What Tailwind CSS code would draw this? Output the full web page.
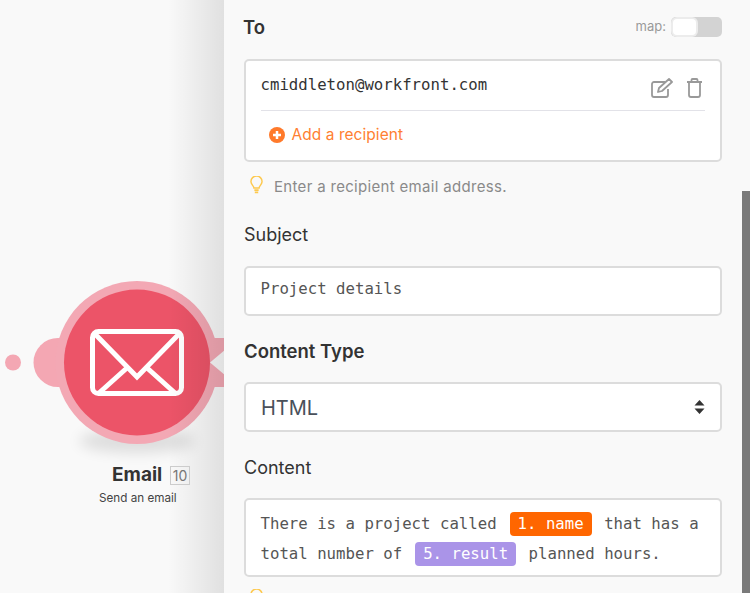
<!DOCTYPE html>
<html lang="en">

<head>
    <meta charset="UTF-8">
    <title>Email module</title>
    <script src="https://cdn.jsdelivr.net/npm/@tailwindcss/browser@4"></script>
</head>

<body class="bg-[#f9f9f9] overflow-hidden">
    <div class="flex w-[750px] h-[593px] overflow-hidden font-['Inter',sans-serif]">
        <!-- canvas with the module node -->
        <div class="relative w-[224px] h-full shrink-0 bg-[#f9f9f9]">
            <svg class="absolute left-0 top-0" width="224" height="593" viewBox="0 0 224 593">
                <defs>
                    <filter id="blur" x="-30%" y="-100%" width="160%" height="300%">
                        <feGaussianBlur stdDeviation="7" />
                    </filter>
                </defs>
                <ellipse cx="137" cy="441" rx="58" ry="12" fill="#000" opacity="0.11" filter="url(#blur)" />
                <circle cx="13" cy="362.500" r="8" fill="#f4a7b3" />
                <circle cx="58" cy="362.500" r="24.500" fill="#f4a7b3" />
                <circle cx="137" cy="362.500" r="81.500" fill="#f3a8b4" />
                <path d="M196 345a12 12 0 0 1 12-7h16v49h-16a12 12 0 0 1-12-7z" fill="#f3a8b4" />
                <path d="M226 349l-16 13.500 16 13.500z" fill="#f9f9f9" />
                <circle cx="137" cy="362.500" r="73" fill="#ec5468" />
                <g fill="none" stroke="#fff" stroke-width="5">
                    <rect x="92.500" y="331.500" width="89" height="62" rx="6" />
                    <path d="M95 334l42 43 42-43" />
                    <path d="M99 393l29-26M175 393l-29-26" />
                </g>
            </svg>
            <!-- shadow the panel throws on the canvas -->
            <div class="absolute inset-y-0 right-0 w-[56px] bg-gradient-to-r from-black/0 to-black/10"></div>
            <div class="absolute left-0 top-[464px] w-full">
                <div class="relative h-[22px]">
                    <span class="absolute left-[112px] top-0 text-[19px] leading-[22px] font-bold text-[#333]">Email</span>
                    <span class="absolute left-[170px] top-[2px] w-[20px] h-[19px] border border-[#ccc] text-[14px] leading-[17px] text-center text-[#777]">10</span>
                </div>
                <p class="absolute left-[99px] top-[26px] text-[11.700px] leading-[16px] text-[#444] whitespace-nowrap">Send an email</p>
            </div>
        </div>

        <!-- settings panel -->
        <div class="relative flex-1 h-full pl-5 pr-7 bg-[#f9f9f9]">
            <div class="flex items-center justify-between h-[24px] mt-[15px]">
                <span class="-ml-[1px] mt-[2px] text-[18.500px] font-semibold text-[#333]">To</span>
                <div class="flex items-center gap-[5px]">
                    <span class="text-[13px] text-[#999]">map:</span>
                    <div class="flex w-[51px] h-[20px] rounded-[5px] bg-[#d3d3d3] p-[2px]">
                        <div class="w-[23px] h-[16px] rounded-[4px] bg-white ring-2 ring-[#ececec]"></div>
                    </div>
                </div>
            </div>

            <div class="mt-[20px] h-[103px] rounded-[5px] border-2 border-[#dcdcdc] bg-white pl-[14.500px] pr-[15px]">
                <div class="flex justify-between h-[50px] border-b border-[#e2e2e8]">
                    <span class="font-['DejaVu_Sans_Mono',monospace] text-[15.700px] leading-[20px] mt-[14px] text-[#333]">cmiddleton@workfront.com</span>
                    <div class="flex gap-[13px] mt-[17px] h-[20px] mr-[2px]">
                        <svg width="22" height="20" viewBox="0 0 22 20" fill="none" stroke="#999" stroke-width="1.800">
                            <path d="M14 4H3a2 2 0 0 0-2 2v11a2 2 0 0 0 2 2h12a2 2 0 0 0 2-2v-6" />
                            <path d="M8 10l10-9 3 3-10 9-4 1z" stroke-linejoin="round" />
                        </svg>
                        <svg width="17" height="20" viewBox="0 0 17 20" fill="none" stroke="#999" stroke-width="1.800">
                            <path d="M1 4h15M5.500 4V2a1 1 0 0 1 1-1h4a1 1 0 0 1 1 1v2" />
                            <path d="M3 4v13a2 2 0 0 0 2 2h7a2 2 0 0 0 2-2V4" />
                        </svg>
                    </div>
                </div>
                <div class="flex items-center gap-[7px] h-[47px] pl-[8px]">
                    <svg width="16" height="16" viewBox="0 0 16 16">
                        <circle cx="8" cy="8" r="8" fill="#ff7a2b" />
                        <path d="M8 4v8M4 8h8" stroke="#fff" stroke-width="2.500" />
                    </svg>
                    <span class="text-[15.500px] tracking-[0.05px] text-[#ff7f32]">Add a recipient</span>
                </div>
            </div>

            <div class="flex items-center h-[20px] mt-[15px] pl-[6px] gap-[11px]">
                <svg class="-mt-[4px]" width="13" height="18" viewBox="0 0 15 21" fill="none" stroke="#fdc94f" stroke-width="1.700">
                    <path d="M4.500 14c0-2.500-3.500-4-3.500-7.500a6.500 6.500 0 0 1 13 0C14 10 10.500 11.500 10.500 14z" />
                    <path d="M5 16.500h5M5.500 19h4" stroke-width="2" />
                </svg>
                <span class="text-[15px] tracking-[0.32px] text-[#8a8a8a]">Enter a recipient email address.</span>
            </div>

            <p class="mt-[26px] text-[18px] leading-[24px] text-[#333]">Subject</p>
            <div class="flex items-center mt-[19px] h-[50px] rounded-[5px] border-2 border-[#dcdcdc] bg-white pl-[14.500px] pr-[15px]">
                <span class="-mt-[4px] font-['DejaVu_Sans_Mono',monospace] text-[15.700px] text-[#555]">Project details</span>
            </div>

            <p class="mt-[23px] text-[18.500px] leading-[24px] font-semibold text-[#333]">Content Type</p>
            <div class="flex items-center justify-between mt-[19px] h-[50px] rounded-[5px] border-2 border-[#dcdcdc] bg-white pl-[15px] pr-[15px]">
                <span class="mt-[1px] text-[20px] text-[#49505a]">HTML</span>
                <svg width="11" height="14" viewBox="0 0 11 14" fill="#333">
                    <path d="M5.500 0l5 5.500H.5zM5.500 14l5-5.500H.5z" />
                </svg>
            </div>

            <p class="mt-[24px] text-[18px] leading-[24px] text-[#333]">Content</p>
            <div class="mt-[18px] h-[79px] rounded-[5px] border-2 border-[#dcdcdc] bg-white pl-[14.500px] pr-[15px] pt-[9px] font-['DejaVu_Sans_Mono',monospace] text-[15.700px] leading-[30px] text-[#555] whitespace-nowrap">
                <div>There is a project called <span class="inline-block ml-[3.500px] mr-[3px] px-[8px] h-[24px] leading-[24px] rounded-[4px] bg-[#ff6600] text-white">1. name</span> that has a</div>
                <div>total number of <span class="inline-block ml-[3.500px] mr-[3px] px-[8px] h-[24px] leading-[24px] rounded-[4px] bg-[#aa94e8] text-white">5. result</span> planned hours.</div>
            </div>

            <svg class="block mt-[12px] ml-[6px]" width="13" height="18" viewBox="0 0 15 21" fill="none" stroke="#fdc94f" stroke-width="1.700">
                <path d="M4.500 14c0-2.500-3.500-4-3.500-7.500a6.500 6.500 0 0 1 13 0C14 10 10.500 11.500 10.500 14z" />
            </svg>

            <!-- scrollbar -->
            <div class="absolute right-0 top-[191px] bottom-0 w-[8px] bg-[#7a7a7a]"></div>
        </div>
    </div>
</body>

</html>
